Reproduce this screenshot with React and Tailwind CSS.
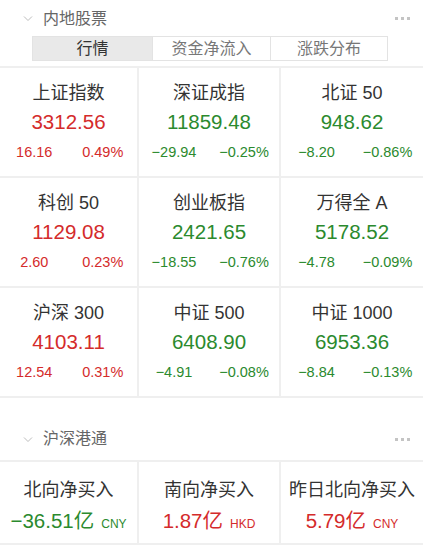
import React from 'react';

const RED = 'text-[#d42b2b]';
const GREEN = 'text-[#2b8a2e]';

const indices = [
  { name: '上证指数', value: '3312.56', chg: '16.16', pct: '0.49%', up: true },
  { name: '深证成指', value: '11859.48', chg: '−29.94', pct: '−0.25%', up: false },
  { name: '北证 50', value: '948.62', chg: '−8.20', pct: '−0.86%', up: false },
  { name: '科创 50', value: '1129.08', chg: '2.60', pct: '0.23%', up: true },
  { name: '创业板指', value: '2421.65', chg: '−18.55', pct: '−0.76%', up: false },
  { name: '万得全 A', value: '5178.52', chg: '−4.78', pct: '−0.09%', up: false },
  { name: '沪深 300', value: '4103.11', chg: '12.54', pct: '0.31%', up: true },
  { name: '中证 500', value: '6408.90', chg: '−4.91', pct: '−0.08%', up: false },
  { name: '中证 1000', value: '6953.36', chg: '−8.84', pct: '−0.13%', up: false },
];

const flows = [
  { name: '北向净买入', value: '−36.51亿', unit: 'CNY', up: false },
  { name: '南向净买入', value: '1.87亿', unit: 'HKD', up: true },
  { name: '昨日北向净买入', value: '5.79亿', unit: 'CNY', up: true },
];

const font = { fontFamily: '"Liberation Sans", "Noto Sans CJK SC", sans-serif' };

function Chevron() {
  return (
    <svg width="10" height="7" viewBox="0 0 10 7" className="shrink-0">
      <path d="M1 1.5 L5 5.5 L9 1.5" fill="none" stroke="#bdbdbd" strokeWidth="1" />
    </svg>
  );
}

function Dots() {
  return (
    <div className="flex gap-[3px]">
      <span className="w-[3px] h-[3px] bg-[#c4c4c4]" />
      <span className="w-[3px] h-[3px] bg-[#c4c4c4]" />
      <span className="w-[3px] h-[3px] bg-[#c4c4c4]" />
    </div>
  );
}

function SectionHeader({ title, className }) {
  return (
    <div className={`flex items-center justify-between pl-[23px] pr-[13px] ${className}`}>
      <div className="flex items-center gap-[10px]">
        <Chevron />
        <span className="text-[16px] leading-[22px] text-[#666]">{title}</span>
      </div>
      <Dots />
    </div>
  );
}

export default function App() {
  return (
    <div className="w-[423px] h-[553px] bg-white overflow-hidden" style={font}>
      <SectionHeader title="内地股票" className="h-[36px] pt-[1px]" />
      <div className="flex mx-[32px] w-[356px] h-[25px] border border-[#e3e3e3] text-[16px] leading-[23px]">
        <div className="w-[119px] bg-[#e9e9e9] text-[#333] text-center">行情</div>
        <div className="w-[118px] border-l border-[#e3e3e3] text-[#777] text-center">资金净流入</div>
        <div className="flex-1 border-l border-[#e3e3e3] text-[#777] text-center">涨跌分布</div>
      </div>
      <div className="mt-[5px] grid grid-cols-[139px_142px_142px] border-t-2 border-[#efefef]">
        {indices.map((it, i) => (
          <div
            key={i}
            className={`h-[110px] flex flex-col items-center border-b-2 border-[#efefef] ${i % 3 !== 2 ? 'border-r-2' : ''}`}
          >
            <div className="mt-[13px] text-[18px] leading-[24px] text-[#333] whitespace-pre">{it.name}</div>
            <div className={`mt-[4px] text-[20.5px] leading-[26px] ${it.up ? RED : GREEN}`}>{it.value}</div>
            <div className={`mt-[8px] w-full grid grid-cols-2 text-[14.5px] leading-[18px] ${it.up ? RED : GREEN}`}>
              <span className="text-center">{it.chg}</span>
              <span className="text-center">{it.pct}</span>
            </div>
          </div>
        ))}
      </div>
      <SectionHeader title="沪深港通" className="h-[62px] pt-[20px]" />
      <div className="grid grid-cols-[139px_142px_142px] border-t-2 border-b-2 border-[#efefef]">
        {flows.map((it, i) => (
          <div key={i} className={`h-[81px] flex flex-col items-center ${i !== 2 ? 'border-r-2 border-[#efefef]' : ''}`}>
            <div className="mt-[16px] text-[18px] leading-[24px] text-[#333] whitespace-nowrap">{it.name}</div>
            <div className={`mt-[5px] flex items-baseline gap-[7px] ${it.up ? RED : GREEN}`}>
              <span className="text-[20.5px] leading-[28px]">{it.value}</span>
              <span className="text-[12px]">{it.unit}</span>
            </div>
          </div>
        ))}
      </div>
    </div>
  );
}
